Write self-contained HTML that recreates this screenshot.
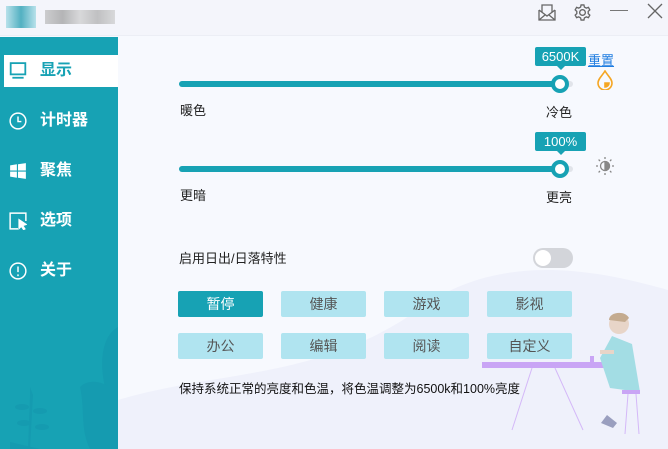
<!DOCTYPE html>
<html><head><meta charset="utf-8"><style>
*{margin:0;padding:0;box-sizing:border-box}
body{width:668px;height:449px;overflow:hidden;background:#f7f9fe;font-family:"Liberation Sans","Noto Sans CJK SC",sans-serif;position:relative;font-size:13px;color:#222}
.abs{position:absolute}
.title{left:0;top:0;width:668px;height:36px;background:#f4f5fb;border-bottom:1px solid #eceef5}
.side{left:0;top:37px;width:118px;height:412px;background:#17a2b4;overflow:hidden}
.nav{position:absolute;left:0;width:118px;height:32px;color:#fff;font-size:16px;font-weight:bold;line-height:32px;padding-left:40px}
.nav.sel{left:4px;width:114px;background:#fff;color:#17a2b4;padding-left:36px}
.ic{position:absolute;left:9px;top:7px}
.track{height:6px;border-radius:3px;background:#17a2b4}
.thumb{width:18px;height:18px;border-radius:50%;background:#fff;border:4px solid #17a2b4}
.tip{background:#17a2b4;color:#fff;font-size:13px;text-align:center;line-height:19px;border-radius:2px}
.tip:after{content:"";position:absolute;left:50%;bottom:-4px;margin-left:-4px;border:4px solid transparent;border-bottom:0;border-top-color:#17a2b4}
.btn{width:85px;height:26px;background:#b0e4f0;border-radius:2px;text-align:center;line-height:26px;font-size:14px;color:#555}
</style></head><body>
<div class="abs title"></div>
<div class="abs" style="left:6px;top:6px;width:30px;height:22px;background:linear-gradient(90deg,#a9dce6,#2a9fb3,#a9dce6);opacity:.8"></div>
<div class="abs" style="left:45px;top:10px;width:70px;height:14px;background:linear-gradient(90deg,#bbb,#999,#ccc,#aaa,#ccc);opacity:.7"></div>
<svg class="abs" style="left:537px;top:3px" width="20" height="18" viewBox="0 0 20 18" fill="none" stroke="#666" stroke-width="1.3"><path d="M2 7v10h16V7"/><path d="M2 7l8 6 8-6"/><path d="M5 9V2h10v7"/><path d="M2 17l6-5M18 17l-6-5"/></svg>
<svg class="abs" style="left:573px;top:3px" width="19" height="19" viewBox="0 0 20 20" fill="none" stroke="#666" stroke-width="1.4"><circle cx="10" cy="10" r="3"/><path d="M8.5 2h3l.5 2.3 2 1.1 2.2-.8 1.5 2.6-1.7 1.6v2.4l1.7 1.6-1.5 2.6-2.2-.8-2 1.1-.5 2.3h-3l-.5-2.3-2-1.1-2.2.8-1.5-2.6 1.7-1.6V8.8L2.3 7.2l1.5-2.6 2.2.8 2-1.1z"/></svg>
<div class="abs" style="left:610px;top:10px;width:18px;height:1px;background:#777"></div>
<svg class="abs" style="left:647px;top:3px" width="16" height="16" viewBox="0 0 16 16" stroke="#666" stroke-width="1.3"><path d="M1 1l14 14M15 1L1 15"/></svg>

<div class="abs side">
<svg class="abs" style="left:60px;top:290px" width="58" height="122" viewBox="0 0 58 122" fill="#159bb0"><path d="M58 0C40 10 40 40 45 60 30 70 40 100 58 110z"/><path d="M20 60c10-10 30-5 38 10v52H30c-10-20-5-40-10-62z"/></svg>
<svg class="abs" style="left:10px;top:350px" width="50" height="62" viewBox="0 0 50 62" fill="#159bb0"><path d="M20 0l3 8-3 54h-2L20 8z"/><ellipse cx="12" cy="20" rx="7" ry="3"/><ellipse cx="30" cy="24" rx="7" ry="3"/><ellipse cx="14" cy="36" rx="7" ry="3"/><ellipse cx="32" cy="40" rx="7" ry="3"/><path d="M0 55l30 7H0z"/></svg>
<div class="nav sel" style="top:18px"><svg class="ic" style="left:5px" width="18" height="18" viewBox="0 0 16 16" fill="none" stroke="#17a2b4" stroke-width="1.6"><rect x="1.5" y="1" width="13" height="10"/><path d="M3 14h10"/></svg>显示</div>
<div class="nav" style="top:68px"><svg class="ic" width="18" height="18" viewBox="0 0 16 16" fill="none" stroke="#fff" stroke-width="1.3"><circle cx="8" cy="8" r="7"/><path d="M8 4v4.5h3"/></svg>计时器</div>
<div class="nav" style="top:118px"><svg class="ic" width="18" height="18" viewBox="0 0 16 16" fill="#fff"><path d="M1 3l6-1v5.5H1zM8 2l7-1v6.5H8zM1 8.5h6V14l-6-1zM8 8.5h7V15l-7-1z"/></svg>聚焦</div>
<div class="nav" style="top:168px"><svg class="ic" width="18" height="18" viewBox="0 0 16 16" fill="none" stroke="#fff" stroke-width="1.3"><path d="M8 15H1V1h14v7"/><path d="M9 7l6 4-3 1 2 3-1 .5-2-3-2 2z" fill="#fff"/></svg>选项</div>
<div class="nav" style="top:218px"><svg class="ic" width="18" height="18" viewBox="0 0 16 16" fill="none" stroke="#fff" stroke-width="1.3"><circle cx="8" cy="8" r="7"/><path d="M8 4v5M8 11v1.5"/></svg>关于</div>
</div>

<svg class="abs" style="left:118px;top:250px" width="550" height="199" viewBox="0 0 550 199"><path d="M0 199V150C100 120 200 130 300 60 380 0 480 20 550 40V199z" fill="#eff1fb"/></svg>

<div class="abs" style="left:179px;top:81px;width:394px;height:6px;border-radius:3px;background:#e1e4ea"></div>
<div class="abs track" style="left:179px;top:81px;width:382px"></div>
<div class="abs thumb" style="left:551px;top:75px"></div>
<div class="abs tip" style="left:535px;top:47px;width:51px">6500K</div>
<div class="abs" style="left:588px;top:50px;color:#1f7de0;text-decoration:underline;font-size:13px">重置</div>
<svg class="abs" style="left:596px;top:70px" width="18" height="20" viewBox="0 0 18 20" fill="none" stroke="#f5a623" stroke-width="1.6"><path d="M9 1C6 6 2 9 2 13a7 7 0 0014 0c0-4-4-7-7-12z"/><path d="M9 17a4 4 0 004-4H9z" fill="#f5a623"/></svg>
<div class="abs" style="left:180px;top:100px">暖色</div>
<div class="abs" style="left:546px;top:102px">冷色</div>

<div class="abs" style="left:179px;top:166px;width:394px;height:6px;border-radius:3px;background:#e1e4ea"></div>
<div class="abs track" style="left:179px;top:166px;width:382px"></div>
<div class="abs thumb" style="left:551px;top:160px"></div>
<div class="abs tip" style="left:535px;top:132px;width:51px">100%</div>
<svg class="abs" style="left:595px;top:156px" width="20" height="20" viewBox="0 0 20 20" stroke="#888" stroke-width="1.3" fill="none"><circle cx="10" cy="10" r="4.5"/><path d="M10 5.5a4.5 4.5 0 010 9z" fill="#888"/><path d="M10 1v2M10 17v2M1 10h2M17 10h2M3.6 3.6l1.4 1.4M15 15l1.4 1.4M3.6 16.4L5 15M15 5l1.4-1.4"/></svg>
<div class="abs" style="left:180px;top:185px">更暗</div>
<div class="abs" style="left:546px;top:187px">更亮</div>

<div class="abs" style="left:179px;top:248px">启用日出/日落特性</div>
<div class="abs" style="left:533px;top:248px;width:40px;height:20px;border-radius:10px;background:#d3d5da"></div>
<div class="abs" style="left:535px;top:250px;width:16px;height:16px;border-radius:50%;background:#fff"></div>

<svg class="abs" style="left:482px;top:310px" width="175" height="130" viewBox="0 0 175 130"><rect x="0" y="52" width="128" height="6" fill="#c9a5f5"/><path d="M50 58l-20 62M73 58l28 62" stroke="#d4b8f8"/><rect x="108" y="46" width="4" height="8" fill="#c9a5f5"/><circle cx="137" cy="14" r="10" fill="#e8d5c8"/><path d="M127 10c0-8 16-10 20-2l-4 4z" fill="#c4ab8f"/><path d="M130 26l20 8 8 48-30-4-10-30z" fill="#a3dde4"/><path d="M118 40h14v4h-14z" fill="#e8d5c8"/><rect x="140" y="80" width="18" height="4" fill="#c9a5f5"/><path d="M146 84l-3 40M154 84l3 40" stroke="#d4b8f8"/><path d="M125 105l10 8-4 5-12-5z" fill="#9a9fbf"/></svg>

<div class="abs btn" style="left:178px;top:291px;background:#17a2b4;color:#fff">暂停</div>
<div class="abs btn" style="left:281px;top:291px">健康</div>
<div class="abs btn" style="left:384px;top:291px">游戏</div>
<div class="abs btn" style="left:487px;top:291px">影视</div>
<div class="abs btn" style="left:178px;top:333px">办公</div>
<div class="abs btn" style="left:281px;top:333px">编辑</div>
<div class="abs btn" style="left:384px;top:333px">阅读</div>
<div class="abs btn" style="left:487px;top:333px">自定义</div>
<div class="abs" style="left:179px;top:378px;font-size:12.5px;color:#111">保持系统正常的亮度和色温，将色温调整为6500k和100%亮度</div>
</body></html>
